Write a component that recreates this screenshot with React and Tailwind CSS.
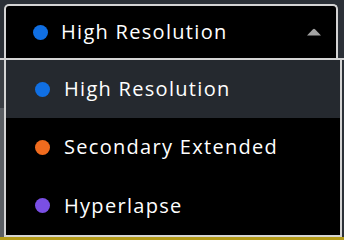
import { useState } from 'react';

const options = [
  { id: 'high', label: 'High Resolution', dot: 'bg-[#106fe3]' },
  { id: 'secondary', label: 'Secondary Extended', dot: 'bg-[#f06b1e]' },
  { id: 'hyper', label: 'Hyperlapse', dot: 'bg-[#7a4fe4]' },
];

const App = () => {
  const [selected, setSelected] = useState('high');
  const current = options.find(o => o.id === selected);

  return (
    <div className="w-[344px] h-[240px] bg-[#2b3037] overflow-hidden flex flex-col font-['Open_Sans',sans-serif] text-white">
      {/* Trigger */}
      <div className="pt-[4px] pl-[4px] pr-[6px]">
        <div className="h-[54px] bg-black border-2 border-b-0 border-[#d4d4d4] rounded-t-[5px] flex items-center pl-[27px] pr-[14px]">
          <span className={`block shrink-0 w-[15px] h-[15px] rounded-full ${current.dot}`} />
          <span className="ml-[13px] text-[20px] tracking-[1.3px] leading-none">{current.label}</span>
          <svg className="ml-auto" width="16" height="8" viewBox="0 0 16 8">
            <path d="M1 7.5 L7 1.2 Q8 0.3 9 1.2 L15 7.5 Z" fill="#a3a3a3" />
          </svg>
        </div>
      </div>
      <div className="h-[2px] bg-[#d4d4d4]" />

      {/* Menu */}
      <div className="flex-1 flex">
        <div className="w-[4px] flex flex-col">
          <div className="h-[48px] bg-[#3a3e44]" />
          <div className="flex-1 bg-[#5a5e63]" />
        </div>
        <ul className="flex-1 bg-black border-2 border-t-0 border-[#d4d4d4] flex flex-col">
          {options.map((o, i) => (
            <li
              key={o.id}
              onClick={() => setSelected(o.id)}
              className={`${i === 2 ? 'h-[59px]' : 'h-[58px]'} flex items-center pl-[29px] ${i === 0 ? 'bg-[#25292f]' : ''}`}
            >
              <span className={`block shrink-0 w-[15px] h-[15px] rounded-full ${o.dot}`} />
              <span className="ml-[14px] text-[20px] tracking-[1.3px] leading-none">{o.label}</span>
            </li>
          ))}
        </ul>
        <div className="w-[2px] bg-[#2b3037]" />
      </div>
      <div className="h-[3px] bg-[#b39a18]" />
    </div>
  );
};

export default App;
